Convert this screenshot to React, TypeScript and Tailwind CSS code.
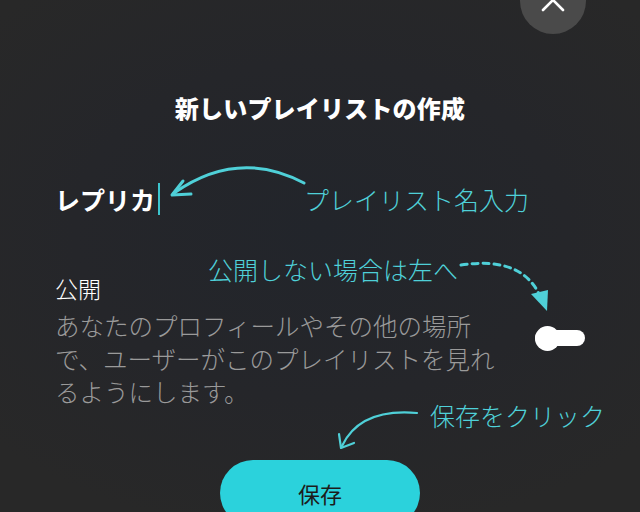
import React from "react";

export default function App() {
  return (
    <div className="relative w-[640px] h-[512px] overflow-hidden bg-[radial-gradient(ellipse_70%_60%_at_50%_45%,#22252b_0%,#25262a_55%,#282828_100%)] font-['Noto_Sans_CJK_JP','Noto_Sans',sans-serif]">
      {/* close button */}
      <button className="absolute left-[520px] top-[-32px] w-[66px] h-[66px] rounded-full bg-[#4a4a4a] flex items-center justify-center">
        <svg width="24" height="24" viewBox="0 0 24 24" className="mt-[-2px]">
          <path d="M2 2 L22 22 M22 2 L2 22" stroke="#ffffff" strokeWidth="2.6" strokeLinecap="round" fill="none" />
        </svg>
      </button>

      <div className="flex flex-col pt-[90px] px-[55px]">
        <h1 className="text-center text-[24px] leading-[36px] font-black text-white tracking-[0.2px]">
          新しいプレイリストの作成
        </h1>

        <div className="mt-[55px] h-[36px] flex items-center">
          <span className="text-[25px] leading-[36px] font-bold text-white">レプリカ</span>
          <span className="ml-[3px] w-[2px] h-[32px] bg-[#3cc4cd]" />
        </div>

        <div className="mt-[55px] flex items-center justify-between">
          <div>
            <div className="text-[23px] leading-[33px] font-light text-white">公開</div>
            <p className="mt-[4px] text-[24.5px] leading-[33px] font-light text-[#9a9a9a] whitespace-nowrap">
              あなたのプロフィールやその他の場所
              <br />
              で、ユーザーがこのプレイリストを見れ
              <br />
              るようにします。
            </p>
          </div>
          <div className="relative w-[50px] h-[25px] flex items-center mt-[-4px]">
            <div className="w-full h-[16px] rounded-full bg-white" />
            <div className="absolute left-0 top-0 w-[25px] h-[25px] rounded-full bg-white" />
          </div>
        </div>

        <button className="mt-[52px] self-center w-[200px] h-[66px] rounded-full bg-[#2bd2dc] text-[22px] text-[#1c1c1c] flex items-center justify-center">
          保存
        </button>
      </div>

      {/* annotation arrows */}
      <svg className="absolute inset-0 pointer-events-none" width="640" height="512" viewBox="0 0 640 512">
        <path d="M304 183 Q238 148 174 193" stroke="#4fd0d8" strokeWidth="3" fill="none" strokeLinecap="round" />
        <path d="M183 181 L172 195 L191 194" stroke="#4fd0d8" strokeWidth="3" fill="none" strokeLinecap="round" strokeLinejoin="round" />

        <path d="M461 265 Q522 256 540 296" stroke="#4fd0d8" strokeWidth="3" fill="none" strokeDasharray="6 5" strokeLinecap="round" />
        <polygon points="531,294 548,290 547,311" fill="#4fd0d8" />

        <path d="M417 413 Q360 408 342 446" stroke="#4fd0d8" strokeWidth="2.2" fill="none" strokeLinecap="round" />
        <path d="M339 434 L341 448 L354 443" stroke="#4fd0d8" strokeWidth="2.2" fill="none" strokeLinecap="round" strokeLinejoin="round" />
      </svg>

      {/* annotation texts */}
      <div className="absolute left-[304px] top-[181px] text-[25px] leading-[36px] font-light text-[#4fd0d8] whitespace-nowrap">
        プレイリスト名入力
      </div>
      <div className="absolute left-[208px] top-[251px] text-[25px] leading-[36px] font-light text-[#4fd0d8] whitespace-nowrap">
        公開しない場合は左へ
      </div>
      <div className="absolute left-[430px] top-[397px] text-[25px] leading-[36px] font-light text-[#4fd0d8] whitespace-nowrap">
        保存をクリック
      </div>
    </div>
  );
}
